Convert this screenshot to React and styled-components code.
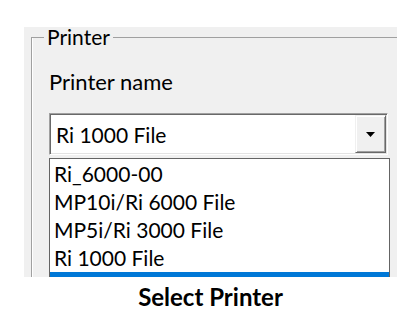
import React from "react";
import styled, { createGlobalStyle } from "styled-components";

const Global = createGlobalStyle`
  html, body { margin: 0; padding: 0; background: #ffffff; }
  body { font-family: "Lato", "Open Sans", sans-serif; color: #000; }
`;

const Page = styled.div`
  width: 405px;
  height: 323px;
  padding: 27px 0 0 24px;
  box-sizing: border-box;
  display: flex;
  flex-direction: column;
`;

const Panel = styled.div`
  width: 373px;
  height: 250px;
  background: #f0f0f0;
  clip-path: inset(-30px 0 0 0);
  padding: 0 0 0 7px;
  box-sizing: border-box;
`;

const GroupBox = styled.fieldset`
  margin: 0;
  width: 366px;
  height: 250px;
  box-sizing: border-box;
  border: none;
  border-top: 1px solid #a0a0a0;
  border-left: 1px solid #a0a0a0;
  box-shadow: inset 1px 0 0 #ffffff;
  padding: 23px 0 0 17px;
  display: flex;
  flex-direction: column;
  overflow: visible;
`;

const Legend = styled.legend`
  font-size: 21px;
  padding: 0 3px;
  margin-left: -5px;
  line-height: 20px;
  color: #000;
`;

const Label = styled.div`
  font-size: 22px;
  line-height: 24px;
  margin-bottom: 19px;
`;

const Combo = styled.div`
  width: 339px;
  height: 42px;
  flex-shrink: 0;
  box-sizing: border-box;
  background: #fff;
  border-top: 1px solid #a0a0a0;
  border-left: 1px solid #a0a0a0;
  border-right: 1px solid #ffffff;
  border-bottom: 1px solid #ffffff;
  box-shadow: inset 1px 1px 0 #696969, inset -1px -1px 0 #e3e3e3;
  padding: 1px;
  display: flex;
  align-items: stretch;
`;

const ComboText = styled.div`
  flex: 1;
  font-size: 21px;
  display: flex;
  align-items: center;
  padding-left: 5px;
`;

const DropButton = styled.div`
  width: 31px;
  background: #f0f0f0;
  box-sizing: border-box;
  border-top: 1px solid #f0f0f0;
  border-left: 1px solid #f0f0f0;
  border-right: 1px solid #696969;
  border-bottom: 1px solid #696969;
  box-shadow: inset 1px 1px 0 #ffffff, inset -1px -1px 0 #a0a0a0;
  display: flex;
  align-items: center;
  justify-content: center;
`;

const List = styled.div`
  margin-top: 3px;
  width: 341px;
  flex-shrink: 0;
  box-sizing: border-box;
  background: #fff;
  border: 1px solid #646464;
  display: flex;
  flex-direction: column;
  padding-top: 1px;
`;

const Item = styled.div`
  font-size: 21px;
  height: 28px;
  line-height: 28px;
  padding-left: 4px;
  white-space: nowrap;
  flex-shrink: 0;
  background: ${(p) => (p.selected ? "#0078d7" : "transparent")};
  color: ${(p) => (p.selected ? "#fff" : "#000")};
`;

const Caption = styled.div`
  font-weight: 700;
  font-size: 24px;
  text-align: center;
  width: 373px;
  margin-top: 6px;
  line-height: 28px;
`;

export default function App() {
  const items = ["Ri_6000-00", "MP10i/Ri 6000 File", "MP5i/Ri 3000 File", "Ri 1000 File"];
  return (
    <>
      <Global />
      <Page>
        <Panel>
          <GroupBox>
            <Legend>Printer</Legend>
            <Label>Printer name</Label>
            <Combo>
              <ComboText>Ri 1000 File</ComboText>
              <DropButton>
                <svg width="9" height="5" viewBox="0 0 9 5">
                  <polygon points="0,0 9,0 4.5,5" fill="#000" />
                </svg>
              </DropButton>
            </Combo>
            <List>
              {items.map((t) => (
                <Item key={t}>{t}</Item>
              ))}
              <Item selected>&nbsp;</Item>
            </List>
          </GroupBox>
        </Panel>
        <Caption>Select Printer</Caption>
      </Page>
    </>
  );
}
